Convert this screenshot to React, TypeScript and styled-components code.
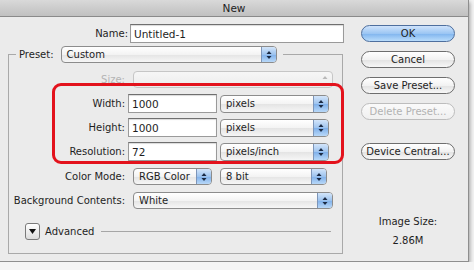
import React from "react";
import styled, { createGlobalStyle, css } from "styled-components";

const GlobalStyle = createGlobalStyle`
  html, body { margin: 0; padding: 0; background: #f4f4f4; }
  body { font-family: "DejaVu Sans", "Liberation Sans", sans-serif; font-size: 10px; color: #1e1e1e; }
`;

const Window = styled.div`
  position: relative;
  width: 469px;
  height: 262px;
  box-sizing: border-box;
  background: #ebebeb;
  border-right: 1px solid #8e8e8e;
  border-bottom: 1px solid #8e8e8e;
  box-shadow: 1px 2px 4px rgba(0, 0, 0, 0.35);
  display: flex;
  flex-direction: column;
`;

const TitleBar = styled.div`
  height: 16px;
  flex: none;
  border-bottom: 1px solid #8a8a8a;
  background: linear-gradient(#d9d9d9, #c0c0c0);
  display: flex;
  align-items: center;
  justify-content: center;
  font-size: 10.5px;
  color: #222;
`;

const Content = styled.div`
  display: flex;
  padding-top: 7px;
`;

const LeftCol = styled.div`
  width: 345px;
  display: flex;
  flex-direction: column;
`;

const Row = styled.div<{ $gap?: number; $mt?: number; $h?: number }>`
  display: flex;
  align-items: center;
  height: ${(p) => p.$h ?? 19}px;
  gap: ${(p) => p.$gap ?? 2}px;
  margin-top: ${(p) => p.$mt ?? 0}px;
`;

const Label = styled.span<{ $w: number; $disabled?: boolean }>`
  width: ${(p) => p.$w}px;
  flex: none;
  text-align: right;
  white-space: nowrap;
  color: ${(p) => (p.$disabled ? "#b4b4b4" : "#1e1e1e")};
`;

const TextField = styled.div<{ $w: number }>`
  width: ${(p) => p.$w}px;
  height: 19px;
  box-sizing: border-box;
  background: #fff;
  border: 1px solid #9a9a9a;
  border-top-color: #6f6f6f;
  box-shadow: inset 0 1px 1px rgba(0, 0, 0, 0.15);
  padding-left: 3px;
  display: flex;
  align-items: center;
  font-size: 10.5px;
`;

const Popup = styled.div<{ $w: number; $h?: number; $disabled?: boolean }>`
  width: ${(p) => p.$w}px;
  height: ${(p) => p.$h ?? 17}px;
  box-sizing: border-box;
  border: 1px solid #8c8c8c;
  border-radius: 4px;
  background: linear-gradient(#ffffff, #f3f3f3 50%, #e4e4e4 51%, #f6f6f6);
  display: flex;
  align-items: stretch;
  overflow: hidden;
  font-size: 10px;
  ${(p) =>
    p.$disabled &&
    css`
      border-color: #c6c6c6;
      background: linear-gradient(#f6f6f6, #ececec);
    `}
`;

const PopupText = styled.span`
  flex: 1;
  display: flex;
  align-items: center;
  padding-left: 5px;
  white-space: nowrap;
`;

const ArrowCap = styled.span<{ $disabled?: boolean }>`
  width: 14px;
  flex: none;
  display: flex;
  align-items: center;
  justify-content: center;
  border-left: 1px solid #7d95b8;
  background: linear-gradient(#d3e5fa, #9dc3ee 50%, #7fb0ea 51%, #b8d8f8);
  ${(p) =>
    p.$disabled &&
    css`
      border-left: none;
      background: transparent;
    `}
`;

const Arrows = ({ color = "#1a2a44", single = false }: { color?: string; single?: boolean }) => (
  <svg width="6" height="10" viewBox="0 0 6 10">
    <path d="M0.5 4 L3 1 L5.5 4 Z" fill={color} />
    {!single && <path d="M0.5 6 L3 9 L5.5 6 Z" fill={color} />}
  </svg>
);

const Select = ({ w, text, h, disabled }: { w: number; text?: string; h?: number; disabled?: boolean }) => (
  <Popup $w={w} $h={h} $disabled={disabled}>
    <PopupText>{text}</PopupText>
    <ArrowCap $disabled={disabled}>
      {disabled ? <Arrows color="#b8b8b8" single /> : <Arrows />}
    </ArrowCap>
  </Popup>
);

const GroupBox = styled.fieldset`
  margin: 3px 0 0 8px;
  width: 335px;
  height: 208px;
  box-sizing: border-box;
  border: 1px solid #a9a9a9;
  border-radius: 0;
  padding: 0;
  display: flex;
  flex-direction: column;
`;

const Legend = styled.legend`
  margin-left: 7px;
  padding: 0 6px 0 3px;
  display: flex;
  align-items: center;
  gap: 7px;
  height: 17px;
`;

const AdvancedRow = styled.div`
  display: flex;
  align-items: center;
  height: 17px;
  margin-top: 14px;
  padding-left: 16px;
  gap: 5px;
`;

const Disclosure = styled.span`
  width: 15px;
  height: 17px;
  box-sizing: border-box;
  border: 1px solid #7a7a7a;
  border-radius: 3px;
  background: linear-gradient(#ffffff, #dcdcdc);
  display: flex;
  align-items: center;
  justify-content: center;
`;

const Rule = styled.span`
  flex: none;
  width: 230px;
  height: 1px;
  background: #a6a6a6;
  margin-left: 2px;
`;

const RightCol = styled.div`
  width: 94px;
  margin-left: 16px;
  display: flex;
  flex-direction: column;
  align-items: stretch;
  padding-top: 1px;
`;

const Button = styled.div<{ $primary?: boolean; $disabled?: boolean; $mt?: number }>`
  height: 17px;
  box-sizing: border-box;
  margin-top: ${(p) => p.$mt ?? 0}px;
  border: 1px solid #6e6e6e;
  border-radius: 9px;
  background: linear-gradient(#ffffff, #f2f2f2 50%, #e2e2e2 51%, #f7f7f7);
  display: flex;
  align-items: center;
  justify-content: center;
  font-size: 10px;
  white-space: nowrap;
  ${(p) =>
    p.$primary &&
    css`
      border-color: #4e6f9e;
      background: linear-gradient(#cfe3fb, #9cc6f3 50%, #7fb4ee 51%, #b9dcfb);
    `}
  ${(p) =>
    p.$disabled &&
    css`
      border-color: #bdbdbd;
      color: #b2b2b2;
      background: linear-gradient(#fafafa, #f0f0f0);
    `}
`;

const ImageSize = styled.div`
  margin-top: 56px;
  display: flex;
  flex-direction: column;
  align-items: center;
  gap: 8px;
  font-size: 10px;
`;

const Highlight = styled.div`
  position: absolute;
  left: 52px;
  top: 83px;
  width: 292px;
  height: 81px;
  box-sizing: border-box;
  border: 3px solid #e3121c;
  border-radius: 9px;
  pointer-events: none;
`;

export default function App() {
  return (
    <>
      <GlobalStyle />
      <Window>
        <TitleBar>New</TitleBar>
        <Content>
          <LeftCol>
            <Row $gap={2}>
              <Label $w={128}>Name:</Label>
              <TextField $w={214}>Untitled-1</TextField>
            </Row>
            <GroupBox>
              <Legend>
                <span>Preset:</span>
                <Select w={216} text="Custom" />
              </Legend>
              <Row $h={17} $gap={8} $mt={8}>
                <Label $w={116} $disabled>Size:</Label>
                <Select w={200} disabled />
              </Row>
              <Row $gap={3} $mt={6}>
                <Label $w={116}>Width:</Label>
                <TextField $w={89}>1000</TextField>
                <Select w={109} h={18} text="pixels" />
              </Row>
              <Row $gap={3} $mt={5}>
                <Label $w={116}>Height:</Label>
                <TextField $w={89}>1000</TextField>
                <Select w={109} h={18} text="pixels" />
              </Row>
              <Row $gap={3} $mt={5}>
                <Label $w={116}>Resolution:</Label>
                <TextField $w={89}>72</TextField>
                <Select w={109} h={18} text="pixels/inch" />
              </Row>
              <Row $h={17} $gap={8} $mt={7}>
                <Label $w={116}>Color Mode:</Label>
                <Select w={79} text="RGB Color" />
                <Select w={107} text="8 bit" />
              </Row>
              <Row $h={17} $gap={8} $mt={7}>
                <Label $w={116}>Background Contents:</Label>
                <Select w={200} text="White" />
              </Row>
              <AdvancedRow>
                <Disclosure>
                  <svg width="7" height="5" viewBox="0 0 7 5">
                    <path d="M0 0 L7 0 L3.5 5 Z" fill="#111" />
                  </svg>
                </Disclosure>
                <span>Advanced</span>
                <Rule />
              </AdvancedRow>
            </GroupBox>
          </LeftCol>
          <RightCol>
            <Button $primary>OK</Button>
            <Button $mt={9}>Cancel</Button>
            <Button $mt={9}>Save Preset...</Button>
            <Button $mt={9} $disabled>Delete Preset...</Button>
            <Button $mt={23}>Device Central...</Button>
            <ImageSize>
              <span>Image Size:</span>
              <span>2.86M</span>
            </ImageSize>
          </RightCol>
        </Content>
        <Highlight />
      </Window>
    </>
  );
}
